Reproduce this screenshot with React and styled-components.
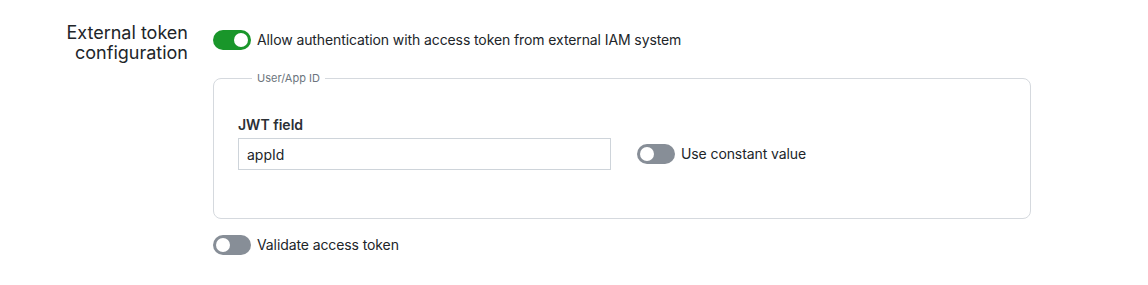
import React, { useState } from "react";
import styled, { createGlobalStyle } from "styled-components";

const Global = createGlobalStyle`
  html, body { margin: 0; padding: 0; background: #fff; }
  body { font-family: Inter, "Noto Sans", sans-serif; color: #212529; }
  * { box-sizing: border-box; }
`;

const Page = styled.div`
  width: 1148px;
  height: 285px;
  padding: 23px 0 0 0;
`;

const FormRow = styled.div`
  display: grid;
  grid-template-columns: 188px 818px;
  column-gap: 25px;
`;

const RowLabel = styled.div`
  font-size: 18px;
  line-height: 20px;
  text-align: right;
  color: #212529;
`;

const Stack = styled.div`
  display: flex;
  flex-direction: column;
`;

const SwitchLine = styled.label`
  display: flex;
  align-items: center;
  gap: 6px;
  font-size: 14px;
  letter-spacing: -0.1px;
  color: #212529;
  height: 33px;
  cursor: pointer;
`;

const Track = styled.span`
  position: relative;
  width: 38px;
  height: 20px;
  border-radius: 10px;
  background: ${(p) => (p.$on ? "#19962a" : "#878e97")};
  flex-shrink: 0;
`;

const Thumb = styled.span`
  position: absolute;
  top: 3px;
  left: ${(p) => (p.$on ? "21px" : "3px")};
  width: 14px;
  height: 14px;
  border-radius: 50%;
  background: #fff;
`;

const Fieldset = styled.fieldset`
  margin: 15px 0 0 0;
  padding: 31px 24px 48px 24px;
  border: 1px solid #d5d9de;
  border-radius: 8px;
  min-width: 0;
`;

const Legend = styled.legend`
  font-size: 11px;
  color: #6c757d;
  padding: 0 5px;
  margin-left: 14px;
`;

const FieldRow = styled.div`
  display: flex;
  align-items: flex-end;
  gap: 26px;
`;

const Field = styled.div`
  display: flex;
  flex-direction: column;
  gap: 5px;
`;

const FieldLabel = styled.div`
  font-size: 14px;
  font-weight: 600;
  color: #2b3035;
`;

const Input = styled.input`
  width: 373px;
  height: 32px;
  border: 1px solid #ced4da;
  padding: 0 8px;
  font-size: 14px;
  font-family: inherit;
  color: #212529;
  outline: none;
`;

const BottomSwitch = styled.div`
  margin-top: 9px;
`;

function Switch({ on, children, onToggle }) {
  return (
    <SwitchLine onClick={onToggle}>
      <Track $on={on}>
        <Thumb $on={on} />
      </Track>
      <span>{children}</span>
    </SwitchLine>
  );
}

export default function App() {
  const [ext, setExt] = useState(true);
  const [constant, setConstant] = useState(false);
  const [validate, setValidate] = useState(false);
  return (
    <Page>
      <Global />
      <FormRow>
        <RowLabel>
          External token
          <br />
          configuration
        </RowLabel>
        <Stack>
          <Switch on={ext} onToggle={() => setExt(!ext)}>
            Allow authentication with access token from external IAM system
          </Switch>
          <Fieldset>
            <Legend>User/App ID</Legend>
            <FieldRow>
              <Field>
                <FieldLabel>JWT field</FieldLabel>
                <Input defaultValue="appId" />
              </Field>
              <Switch on={constant} onToggle={() => setConstant(!constant)}>
                Use constant value
              </Switch>
            </FieldRow>
          </Fieldset>
          <BottomSwitch>
            <Switch on={validate} onToggle={() => setValidate(!validate)}>
              Validate access token
            </Switch>
          </BottomSwitch>
        </Stack>
      </FormRow>
    </Page>
  );
}
